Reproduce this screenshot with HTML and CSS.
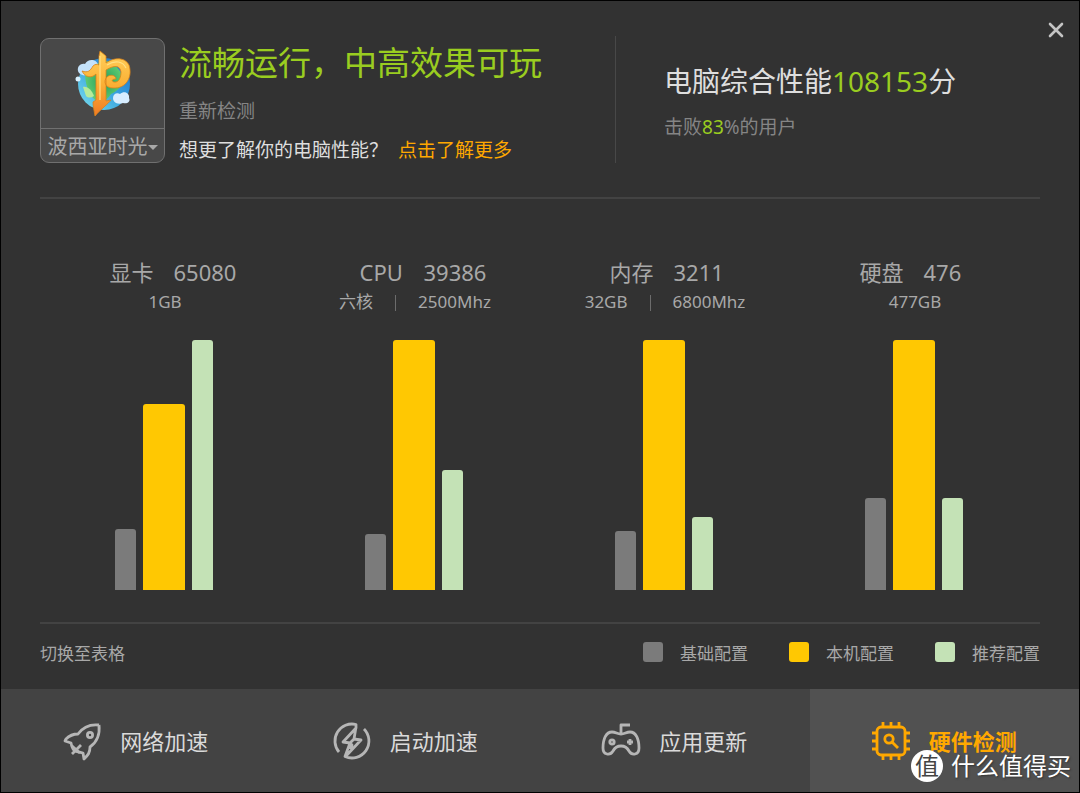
FILE: index.html
```html
<!DOCTYPE html>
<html lang="zh-CN">
<head>
<meta charset="utf-8">
<title>硬件检测</title>
<link rel="stylesheet" href="styles.css">
</head>
<body>
<div class="window">
  <button class="close" type="button" aria-label="关闭">
    <svg width="16" height="16" viewBox="0 0 16 16" fill="none" stroke="#c4c4c4" stroke-width="2.6" stroke-linecap="round"><path d="M2 2l12 12M14 2L2 14"/></svg>
  </button>

  <header class="summary">
    <section class="verdict">
      <button class="game" type="button">
        <span class="game-art">
          <svg width="56" height="68" viewBox="0 0 56 68">
            <defs>
              <linearGradient id="sky" x1="0" y1="1" x2="1" y2="0"><stop offset="0" stop-color="#7de0ee"/><stop offset=".5" stop-color="#39a5df"/><stop offset="1" stop-color="#1b69c2"/></linearGradient>
              <linearGradient id="gold" x1="0" y1="0" x2="0" y2="1"><stop offset="0" stop-color="#ffd05c"/><stop offset=".5" stop-color="#fbb136"/><stop offset="1" stop-color="#f07a24"/></linearGradient>
              <radialGradient id="land"><stop offset="0" stop-color="#1f9b5a"/><stop offset="1" stop-color="#5fcb72"/></radialGradient>
            </defs>
            <circle cx="29" cy="34" r="26" fill="url(#sky)"/>
            <path d="M10 23c5-7 13-11 22-12 8 3 14 9 16 17-1 8-5 13-12 16-5 8-11 9-17 5-6-6-9-16-9-26z" fill="url(#land)"/>
            <path d="M8 37c5-1 9 4 11 9-3 2-6 2-8 0z" fill="#b7ea9b"/>
            <path d="M3 21c-1-5 3-8 7-7 3-6 12-5 13 1 3 4 0 8-4 9-5 3-15 2-16-3z" fill="#c4e2fa"/>
            <circle cx="3" cy="29" r="2.5" fill="#d9f1ff"/>
            <path d="M38 48c0-4 4-6 7-4 4-4 10-1 9 4 2 4-2 6-6 5-6 2-10-1-10-5z" fill="#d7edff"/>
            <path d="M25 1l6 5v7c8-6 19-6 23 2 4 12-3 24-16 23-8 0-10-7-6-11 3-3 9-2 9 2-4 0-5 2-2 3 5 1 7-5 7-10-1-7-7-7-15-2v31l5-1c-3 4-10 9-16 16-1-6-2-10-2-14l3-2V24c-5 5-11 3-14-3 6 2 8 0 11-5 2-2 4-2 6-1V6z" fill="url(#gold)" stroke="#d98219" stroke-width=".8" stroke-linejoin="round"/>
            <path d="M25 6v44M32 15c8-5 16-4 19 3" fill="none" stroke="#ffe085" stroke-width="1.2"/>
          </svg>
        </span>
        <span class="game-name">波西亚时光<i class="caret"></i></span>
      </button>
      <div class="verdict-text">
        <h1>流畅运行，中高效果可玩</h1>
        <a class="retest" href="#">重新检测</a>
        <p class="more">想更了解你的电脑性能？<a href="#">点击了解更多</a></p>
      </div>
    </section>
    <section class="score">
      <p class="score-total">电脑综合性能<b>108153</b>分</p>
      <p class="score-rank">击败<b>83</b>%的用户</p>
    </section>
  </header>

  <main class="charts">
    <section class="chart">
      <h2><span>显卡</span><span>65080</span></h2>
      <p><span>1GB</span></p>
      <div class="bars"><i class="bar base" style="height:24.4%"></i><i class="bar local" style="height:74.4%"></i><i class="bar advised" style="height:100%"></i></div>
    </section>
    <section class="chart">
      <h2><span>CPU</span><span>39386</span></h2>
      <p><span>六核</span><span>2500Mhz</span></p>
      <div class="bars"><i class="bar base" style="height:22.4%"></i><i class="bar local" style="height:100%"></i><i class="bar advised" style="height:48%"></i></div>
    </section>
    <section class="chart">
      <h2><span>内存</span><span>3211</span></h2>
      <p><span>32GB</span><span>6800Mhz</span></p>
      <div class="bars"><i class="bar base" style="height:23.6%"></i><i class="bar local" style="height:100%"></i><i class="bar advised" style="height:29.2%"></i></div>
    </section>
    <section class="chart">
      <h2><span>硬盘</span><span>476</span></h2>
      <p><span>477GB</span></p>
      <div class="bars"><i class="bar base" style="height:36.8%"></i><i class="bar local" style="height:100%"></i><i class="bar advised" style="height:36.8%"></i></div>
    </section>
  </main>

  <div class="options">
    <a href="#">切换至表格</a>
    <ul class="legend">
      <li><i class="swatch base"></i><span>基础配置</span></li>
      <li><i class="swatch local"></i><span>本机配置</span></li>
      <li><i class="swatch advised"></i><span>推荐配置</span></li>
    </ul>
  </div>

  <nav class="tabs">
    <a class="tab" href="#">
      <svg viewBox="0 0 38 38"><path d="M36 3C27 2 20 5 15 12 10 12 6 14 3 17l-1 2 6 2c1 4 1 6 4 8M36 3c1 9-2 17-9 22 0 6-2 8-6 12l-1-6c-4-1-5-1-8-2M18 23L9 32"/><path d="M9 24l8 7"/><circle cx="27" cy="13" r="2.6"/></svg>
      网络加速
    </a>
    <a class="tab" href="#">
      <svg viewBox="0 0 38 38"><path d="M6 30A17 17 0 0 1 23 2.500V6L10 20l7 1-5 13.500A17 17 0 0 0 31 7M23 5l-2 12 7 1-15 16M21 17l-4 4 2 2-2 4"/></svg>
      启动加速
    </a>
    <a class="tab" href="#">
      <svg viewBox="0 0 38 38"><path d="M19 11V3h9M19 12c-4 0-5-2-9-2-6 0-9 7-9 16 0 7 7 8 10 3 2-4 5-5 8-5s6 1 8 5c3 5 10 4 10-3 0-9-3-16-9-16-4 0-5 2-9 2z"/><circle cx="10" cy="20" r="2.2"/><path d="M28 17v6M25 20h6"/></svg>
      应用更新
    </a>
    <a class="tab active" href="#" aria-current="page">
      <svg viewBox="0 0 38 38"><rect x="5" y="5" width="28" height="28" rx="4"/><path d="M11 5V0M19 5V0M27 5V0M11 33v5M19 33v5M27 33v5M5 11H0M5 19H0M5 27H0M33 11h5M33 19h5M33 27h5"/><circle cx="17" cy="17" r="4.2"/><path d="M20 20l6 6"/></svg>
      硬件检测
    </a>
  </nav>

  <div class="watermark"><span class="seal">值</span>什么值得买</div>
</div>
</body>
</html>
```
FILE: styles.css
```css
* {
  box-sizing: border-box;
  margin: 0;
  padding: 0;
}

body {
  background: #323232;
  color: #a8a8a8;
  font-family: "Noto Sans", "Noto Sans CJK SC", sans-serif;
  font-size: 17px;
  line-height: 24px;
}

a {
  color: inherit;
  text-decoration: none;
}

b {
  color: #9acd20;
  font-weight: 400;
}

button {
  background: none;
  border: 0;
  color: inherit;
  font: inherit;
  cursor: pointer;
}

.window {
  position: relative;
  display: flex;
  flex-direction: column;
  min-height: 100vh;
  border: 1px solid #000;
}

.close {
  position: absolute;
  top: 20px;
  right: 14px;
  width: 18px;
  height: 18px;
  display: grid;
  place-items: center;
}

.summary {
  display: grid;
  grid-template-columns: 23fr 17fr;
  margin: 0 39px;
  padding: 35px 0 32px;
  border-bottom: 2px solid #434343;
}

.verdict {
  display: flex;
  gap: 14px;
}

.game {
  align-self: flex-start;
  display: flex;
  flex-direction: column;
  flex: none;
  width: 125px;
  margin-top: 2px;
  background: #484848;
  border: 1px solid #707070;
  border-radius: 9px;
}

.game-art {
  display: grid;
  place-items: center;
  height: 90px;
  border-bottom: 1px solid #707070;
}

.game-name {
  display: flex;
  align-items: center;
  justify-content: center;
  padding-top: 3px;
  font-size: 20px;
  line-height: 30px;
}

.caret {
  border: 5px solid transparent;
  border-top-color: #a8a8a8;
  border-bottom: 0;
}

h1 {
  color: #9acd20;
  font-size: 33px;
  font-weight: 400;
  line-height: 54px;
}

.retest {
  display: block;
  color: #858585;
  font-size: 19px;
  line-height: 30px;
  margin: 6px 0 9px;
}

.more {
  display: flex;
  gap: 10px;
  color: #dedede;
  font-size: 19px;
  line-height: 30px;
}

.more a {
  color: #ffa800;
}

.score {
  margin-bottom: 2px;
  padding: 25px 0 0 48px;
  border-left: 1px solid #484848;
}

.score-total {
  color: #dedede;
  font-size: 28px;
  line-height: 40px;
  margin-bottom: 11px;
}

.score-rank {
  color: #858585;
  font-size: 19px;
  line-height: 30px;
}

.charts {
  display: grid;
  grid-template-columns: repeat(4, 1fr);
  margin: 0 39px;
  padding: 57px 0 32px;
  border-bottom: 2px solid #434343;
}

.chart h2 {
  display: grid;
  grid-template-columns: 44px 64px;
  gap: 20px;
  justify-content: center;
  padding-left: 17px;
  font-size: 22px;
  font-weight: 400;
  line-height: 32px;
}

.chart p {
  display: flex;
  justify-content: center;
  margin: 2px 0 26px;
}

.chart p span + span::before {
  content: "";
  display: inline-block;
  width: 1px;
  height: 16px;
  margin: 0 22px;
  background: #6c6c6c;
  vertical-align: -3px;
}

.bars {
  display: flex;
  align-items: flex-end;
  justify-content: center;
  gap: 7px;
  height: 250px;
  padding-right: 2px;
}

.bar {
  width: 21px;
  border-radius: 3px 3px 0 0;
}

.bar.local {
  width: 42px;
}

.base {
  background: #7b7b7b;
}

.local {
  background: #ffc802;
}

.advised {
  background: #c4e2b6;
}

.options {
  display: flex;
  justify-content: space-between;
  padding: 14px 39px 19px;
  line-height: 32px;
}

.legend {
  display: flex;
  gap: 41px;
  list-style: none;
}

.legend li {
  display: flex;
  gap: 17px;
}

.swatch {
  width: 20px;
  height: 20px;
  margin-top: 4px;
  border-radius: 3px;
}

.tabs {
  flex: 1;
  display: grid;
  grid-template-columns: repeat(4, 1fr);
  min-height: 102px;
  background: #434343;
}

.tab {
  display: flex;
  align-items: center;
  justify-content: center;
  gap: 19px;
  color: #dadada;
  font-size: 22px;
  line-height: 32px;
}

.tab svg {
  width: 38px;
  height: 38px;
  overflow: visible;
  fill: none;
  stroke: #b6b6b6;
  stroke-width: 2.8;
  stroke-linejoin: round;
}

.tab.active {
  background: #515151;
  color: #ffa800;
  font-weight: 700;
}

.tab.active svg {
  stroke: #ffa800;
}

.watermark {
  position: absolute;
  right: 8px;
  bottom: 10px;
  display: flex;
  align-items: center;
  gap: 8px;
  color: #fff;
  font-size: 24px;
  line-height: 32px;
  text-shadow: 1px 1px 2px #333;
}

.seal {
  width: 32px;
  height: 32px;
  border-radius: 50%;
  background: #fff;
  color: #444;
  text-align: center;
  text-shadow: none;
}
```
